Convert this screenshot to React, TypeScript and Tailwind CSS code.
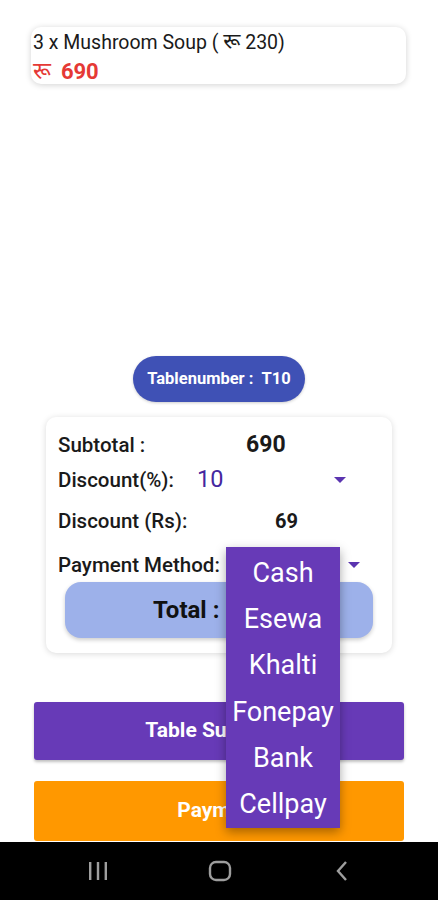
import React from "react";

function Caret() {
  return (
    <svg width="12" height="6" viewBox="0 0 12 6">
      <path d="M0 0 L12 0 L6 6 Z" fill="#5b34b0" />
    </svg>
  );
}

export default function App() {
  const font = { fontFamily: "Roboto, 'Noto Sans', 'Noto Sans Devanagari', sans-serif" };
  return (
    <div className="relative w-[438px] h-[900px] bg-white flex flex-col overflow-hidden" style={font}>
      {/* item card */}
      <div className="mt-[27px] ml-[31px] w-[375px] h-[57px] rounded-[10px] bg-white shadow-[0_1px_6px_rgba(0,0,0,0.18)] pl-[2px] pt-[2px]">
        <div className="text-[19.5px] leading-[26px] text-[#1a1a1a] whitespace-nowrap">
          3 x Mushroom Soup ( <span className="text-[22px]">रू</span> 230)
        </div>
        <div className="mt-[2px] text-[22px] leading-[28px] font-bold text-[#e53935] flex items-center">
          <span className="font-normal text-[23px]">रू</span>
          <span className="ml-[10px]">690</span>
        </div>
      </div>

      {/* tablenumber pill */}
      <div className="mt-[272px] self-center w-[172px] h-[46px] rounded-full bg-[#3f51b5] flex items-center justify-center text-white text-[16.5px] font-bold shadow-[0_1px_3px_rgba(0,0,0,0.2)] whitespace-nowrap">
        Tablenumber :&nbsp;&nbsp;T10
      </div>

      {/* summary card */}
      <div className="mt-[15px] ml-[46px] w-[346px] h-[236px] rounded-[10px] bg-white shadow-[0_1px_6px_rgba(0,0,0,0.15)] pt-[14px] pl-[12px] text-[#1a1a1a]">
        <div className="flex items-center h-[28px]">
          <span className="text-[20.5px] font-medium w-[188px] whitespace-nowrap">Subtotal :</span>
          <span className="text-[23px] font-bold">690</span>
        </div>
        <div className="flex items-center h-[30px] mt-[6px]">
          <span className="text-[20.5px] font-medium w-[139px] whitespace-nowrap">Discount(%):</span>
          <span className="text-[23.5px] text-[#4527a0] w-[137px]">10</span>
          <Caret />
        </div>
        <div className="flex items-center h-[28px] mt-[12px]">
          <span className="text-[20.5px] font-medium w-[217px] whitespace-nowrap">Discount (Rs):</span>
          <span className="text-[20px] font-bold">69</span>
        </div>
        <div className="flex items-center h-[28px] mt-[16px]">
          <span className="text-[20.5px] font-medium w-[290px] whitespace-nowrap">Payment Method:</span>
          <Caret />
        </div>
        <div className="mt-[3px] ml-[7px] w-[308px] h-[56px] rounded-[16px] bg-[#9db1ea] shadow-[0_2px_4px_rgba(0,0,0,0.2)] flex items-center pl-[88px] text-[24px] font-bold text-[#111] whitespace-nowrap">
          Total : 621
        </div>
      </div>

      {/* buttons */}
      <div className="mt-[49px] ml-[34px] w-[370px] h-[58px] rounded-[3px] bg-[#673ab7] shadow-[0_2px_3px_rgba(0,0,0,0.25)] flex items-center justify-center text-white text-[21px] font-bold">
        Table Summary
      </div>
      <div className="mt-[21px] ml-[34px] w-[370px] h-[60px] rounded-[3px] bg-[#ff9800] flex items-center justify-center text-white text-[21px] font-bold">
        Payment
      </div>

      {/* nav bar */}
      <div className="absolute left-0 bottom-0 w-full h-[58px] bg-black flex items-center pl-[86px] gap-[98px]">
        <svg width="24" height="20" viewBox="0 0 24 20">
          <rect x="3" y="1" width="2.4" height="18" fill="#9e9e9e" />
          <rect x="10.8" y="1" width="2.4" height="18" fill="#9e9e9e" />
          <rect x="18.6" y="1" width="2.4" height="18" fill="#9e9e9e" />
        </svg>
        <svg width="24" height="22" viewBox="0 0 24 22">
          <rect x="2" y="2" width="20" height="18" rx="6" fill="none" stroke="#9e9e9e" strokeWidth="2.4" />
        </svg>
        <svg width="24" height="22" viewBox="0 0 24 22">
          <path d="M16 2 L8 11 L16 20" fill="none" stroke="#9e9e9e" strokeWidth="2.4" />
        </svg>
      </div>

      {/* dropdown menu */}
      <div className="absolute left-[226px] top-[547px] w-[114px] h-[281px] bg-[#673ab7] shadow-[0_4px_10px_rgba(0,0,0,0.35)] flex flex-col items-center pt-[3px] text-white text-[27px]">
        {["Cash", "Esewa", "Khalti", "Fonepay", "Bank", "Cellpay"].map((m) => (
          <div key={m} className="h-[46.5px] flex items-center justify-center leading-none">
            {m}
          </div>
        ))}
      </div>
    </div>
  );
}
